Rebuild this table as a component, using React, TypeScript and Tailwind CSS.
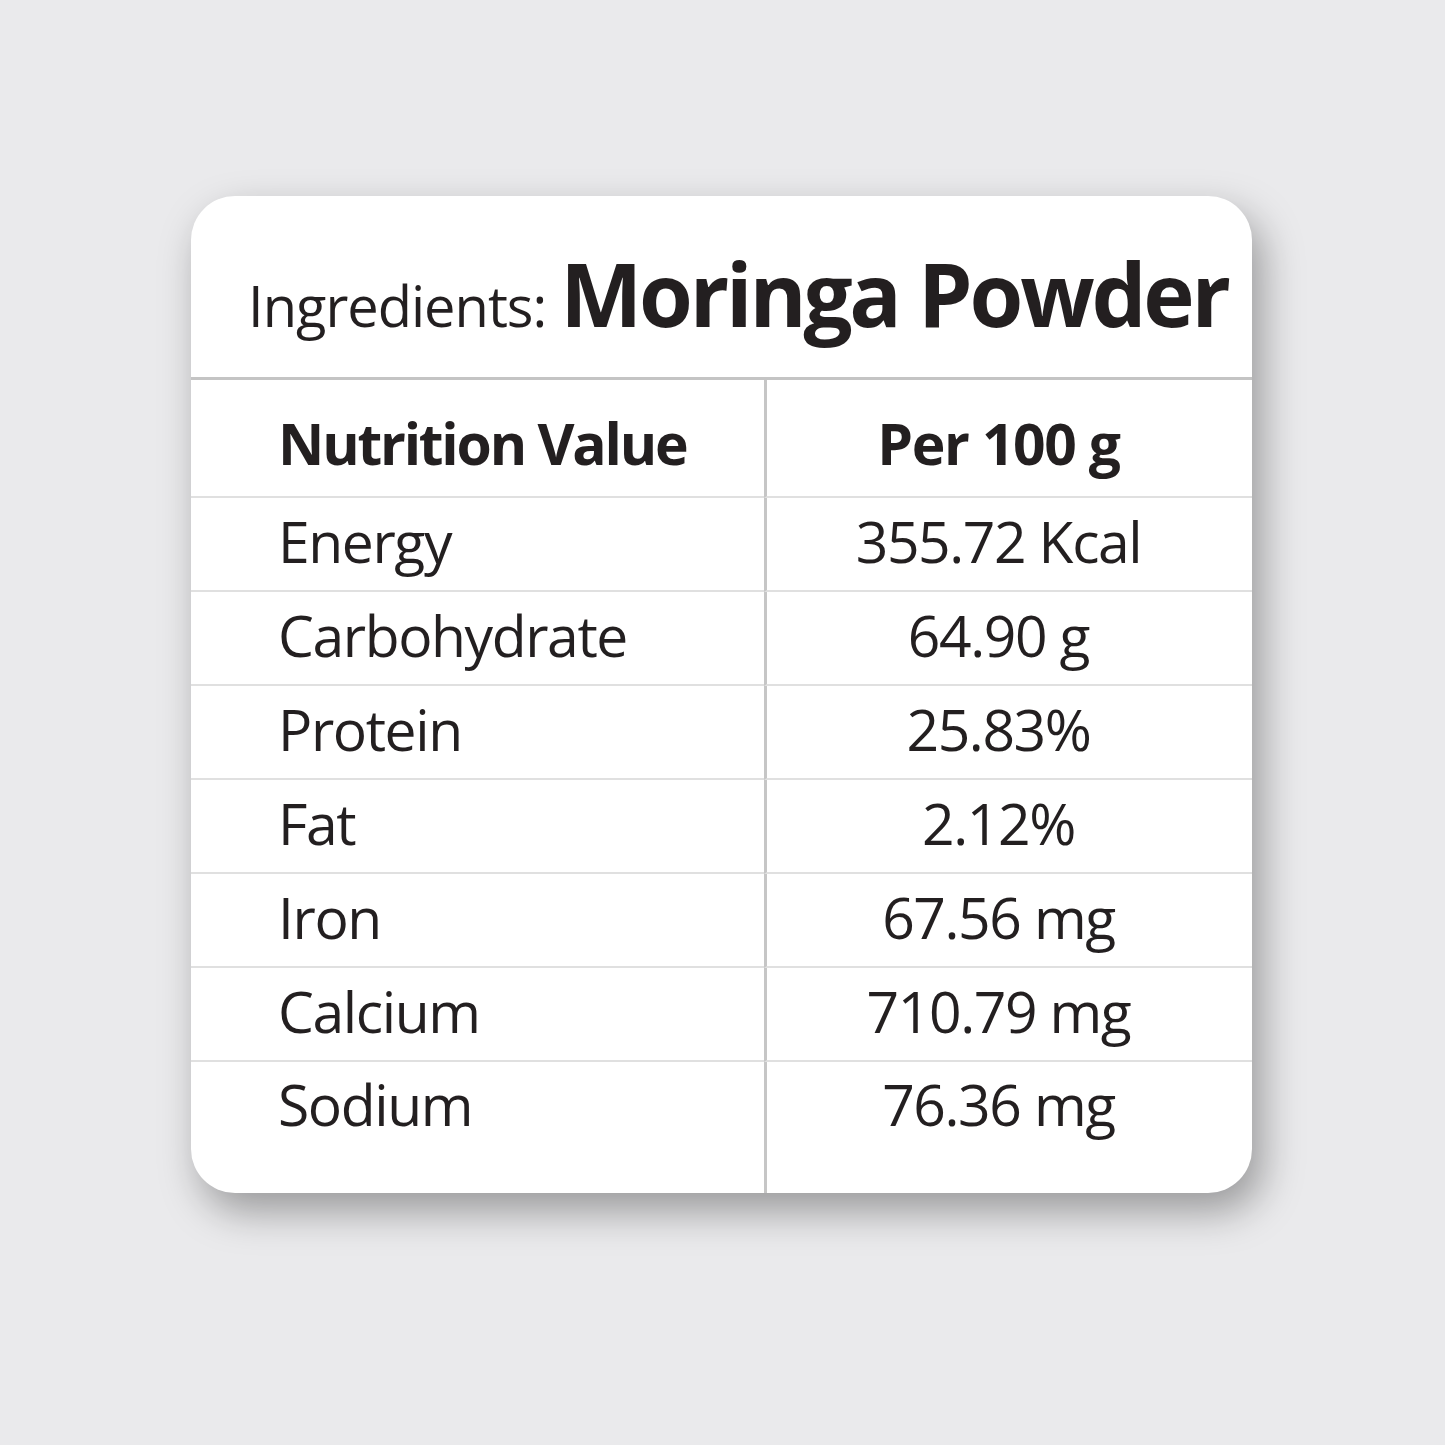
const ROWS: [string, string][] = [
  ["Energy", "355.72 Kcal"],
  ["Carbohydrate", "64.90 g"],
  ["Protein", "25.83%"],
  ["Fat", "2.12%"],
  ["Iron", "67.56 mg"],
  ["Calcium", "710.79 mg"],
  ["Sodium", "76.36 mg"],
];

export default function App() {
  return (
    <div
      className="w-[1445px] h-[1445px] bg-[#eaeaec] pt-[196px] pl-[191px] text-[#231f20]"
      style={{ fontFamily: '"Open Sans", "Noto Sans", sans-serif' }}
    >
      <div className="w-[1061px] h-[997px] bg-white rounded-[44px] shadow-[10px_18px_40px_rgba(0,0,0,0.35)] overflow-hidden flex flex-col">
        <div className="h-[184px] shrink-0 flex items-end pl-[57px] pb-[40px] border-b-[3px] border-[#c4c4c4]">
          <div className="flex items-baseline leading-none">
            <span className="text-[56px] font-normal tracking-[-1px]">Ingredients:</span>
            <span className="text-[87px] font-bold tracking-[-3.2px] ml-[14px]">Moringa Powder</span>
          </div>
        </div>
        <div className="flex-1 grid grid-cols-[573px_1fr] grid-rows-[118px_repeat(6,94px)_1fr]">
          <div className="flex items-center pt-[10px] pl-[87px] border-b-2 border-[#e0e0e0]">
            <span className="text-[57px] font-bold leading-none tracking-[-2.2px]">Nutrition Value</span>
          </div>
          <div className="flex items-center justify-center pt-[10px] pr-[22px] border-b-2 border-l-[3px] border-b-[#e0e0e0] border-l-[#c6c6c6]">
            <span className="text-[57px] font-bold leading-none tracking-[-1.4px]">Per 100 g</span>
          </div>
          {ROWS.map(([name, value], i) => {
            const last = i === ROWS.length - 1;
            return [
              <div
                key={name + "-n"}
                className={
                  last
                    ? "flex items-start pt-[14px] pl-[87px]"
                    : "flex items-center pb-[6px] pl-[87px] border-b-2 border-[#e0e0e0]"
                }
              >
                <span className="text-[57px] font-normal leading-none tracking-[-1.4px]">{name}</span>
              </div>,
              <div
                key={name + "-v"}
                className={
                  last
                    ? "flex items-start justify-center pt-[14px] pr-[22px] border-l-[3px] border-l-[#c6c6c6]"
                    : "flex items-center justify-center pb-[6px] pr-[22px] border-b-2 border-l-[3px] border-b-[#e0e0e0] border-l-[#c6c6c6]"
                }
              >
                <span className="text-[57px] font-normal leading-none tracking-[-1.4px]">{value}</span>
              </div>,
            ];
          })}
        </div>
      </div>
    </div>
  );
}
